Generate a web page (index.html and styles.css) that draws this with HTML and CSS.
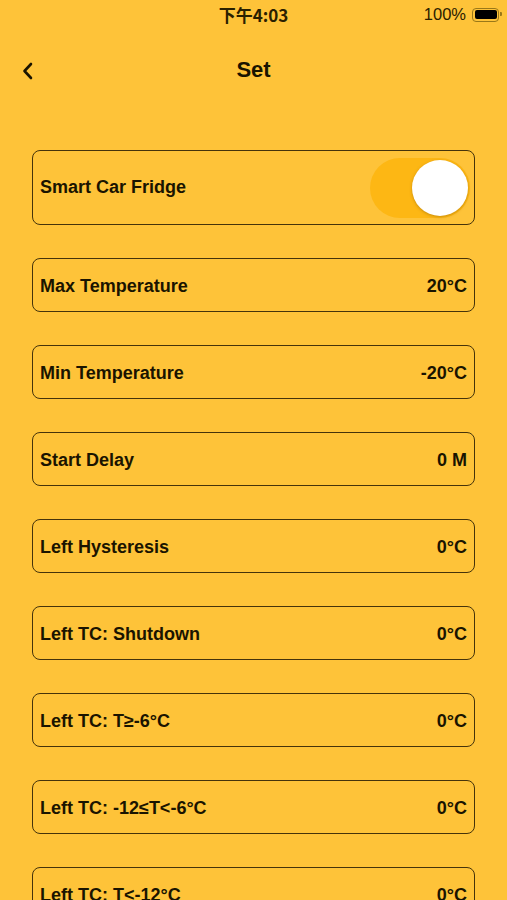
FILE: index.html
```html
<!DOCTYPE html>
<html lang="zh">
<head>
    <meta charset="UTF-8">
    <meta name="viewport" content="width=device-width, initial-scale=1.0">
    <title>Set</title>
    <link rel="stylesheet" href="styles.css">
</head>
<body>

    <div class="status-bar">
        <span class="time">下午4:03</span>
        <div class="battery-area">
            <span class="percent">100%</span>
            <span class="battery"><span class="battery-fill"></span></span>
        </div>
    </div>

    <div class="nav-bar">
        <span class="back">
            <svg width="14" height="18" viewBox="0 0 14 18">
                <path d="M10 2 L3.5 9 L10 16" fill="none" stroke="#1a1400" stroke-width="2.6" stroke-linecap="round" stroke-linejoin="round"/>
            </svg>
        </span>
        <h1>Set</h1>
    </div>

    <div class="settings">
        <div class="item item-switch">
            <span class="label">Smart Car Fridge</span>
            <span class="switch"><span class="knob"></span></span>
        </div>
        <div class="item">
            <span class="label">Max Temperature</span>
            <span class="value">20°C</span>
        </div>
        <div class="item">
            <span class="label">Min Temperature</span>
            <span class="value">-20°C</span>
        </div>
        <div class="item">
            <span class="label">Start Delay</span>
            <span class="value">0 M</span>
        </div>
        <div class="item">
            <span class="label">Left Hysteresis</span>
            <span class="value">0°C</span>
        </div>
        <div class="item">
            <span class="label">Left TC: Shutdown</span>
            <span class="value">0°C</span>
        </div>
        <div class="item">
            <span class="label">Left TC: T≥-6°C</span>
            <span class="value">0°C</span>
        </div>
        <div class="item">
            <span class="label">Left TC: -12≤T&lt;-6°C</span>
            <span class="value">0°C</span>
        </div>
        <div class="item">
            <span class="label">Left TC: T&lt;-12°C</span>
            <span class="value">0°C</span>
        </div>
    </div>

</body>
</html>
```

FILE: styles.css
```css
body {
    margin: 0;
    background-color: #fec339;
    font-family: "Liberation Sans", "Noto Sans CJK SC", sans-serif;
    color: #1a1400;
    height: 900px;
    overflow: hidden;
}

.status-bar {
    height: 28px;
    position: relative;
    display: flex;
    align-items: center;
    justify-content: center;
}
.time {
    font-size: 17px;
    font-weight: bold;
    font-family: "Noto Sans CJK SC", "Liberation Sans", sans-serif;
    color: #2a2000;
    margin-left: 0;
}
.battery-area {
    position: absolute;
    right: 8px;
    top: 5px;
    display: flex;
    align-items: center;
    gap: 6px;
}
.percent {
    font-size: 16.5px;
    color: #2a2000;
}
.battery {
    width: 27px;
    height: 14px;
    border: 1.5px solid #9a7818;
    border-radius: 4px;
    padding: 1.5px;
    box-sizing: border-box;
    display: flex;
    position: relative;
}
.battery::after {
    content: "";
    position: absolute;
    right: -4px;
    top: 3.5px;
    width: 2px;
    height: 4px;
    background-color: #9a7818;
    border-radius: 0 1px 1px 0;
}
.battery-fill {
    flex: 1;
    background-color: #000;
    border-radius: 2px;
}

.nav-bar {
    height: 84px;
    display: flex;
    align-items: center;
    justify-content: center;
    position: relative;
}
.nav-bar h1 {
    margin: 0;
    font-size: 22px;
    font-weight: bold;
}
.back {
    position: absolute;
    left: 21px;
    top: 34px;
    display: flex;
}

.settings {
    padding: 38px 32px 0;
    display: flex;
    flex-direction: column;
    gap: 33px;
}
.item {
    height: 54px;
    box-sizing: border-box;
    border: 1.6px solid #45330a;
    border-radius: 8px;
    display: flex;
    align-items: center;
    justify-content: space-between;
    padding: 3px 7px 0 7px;
    font-size: 18px;
    font-weight: bold;
}
.item-switch {
    height: 75px;
    padding-right: 4px;
    padding-top: 0;
}
.switch {
    width: 100px;
    height: 60px;
    border-radius: 30px;
    background-color: #fdb714;
    display: flex;
    align-items: center;
    justify-content: flex-end;
    padding: 2px;
    box-sizing: border-box;
}
.knob {
    width: 56px;
    height: 56px;
    border-radius: 50%;
    background-color: #fff;
    box-shadow: 0 1px 3px rgba(150, 100, 0, 0.5);
}
```
